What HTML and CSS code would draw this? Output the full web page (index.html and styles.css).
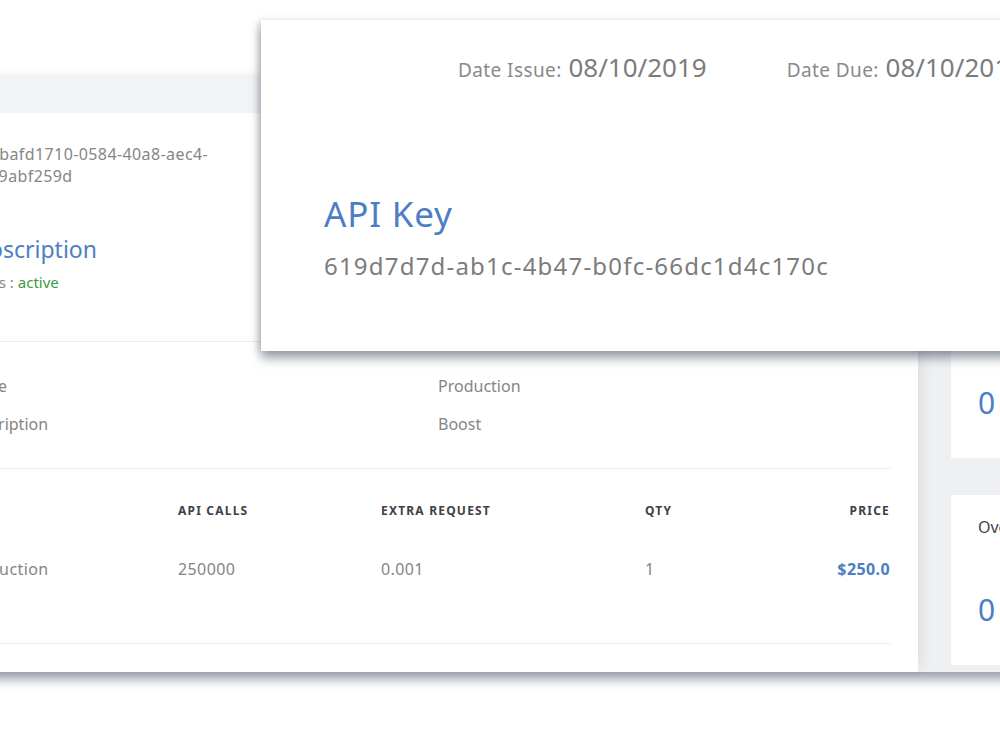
FILE: index.html
```html
<!DOCTYPE html>
<html lang="en">
<head>
    <meta charset="UTF-8">
    <meta name="viewport" content="width=device-width, initial-scale=1.0">
    <title>Subscription Invoice</title>
    <link rel="stylesheet" href="styles.css">
</head>
<body>

<div class="scene">

    <div class="app">
        <div class="app-top"></div>
        <div class="app-body">
            <section class="main">
                <div class="main-band"></div>

                <div class="info">
                    <p class="uid">Key: bafd1710-0584-40a8-aec4-<br>e7c19abf259d</p>
                    <h2 class="sub-title">Subscription</h2>
                    <p class="status">Status : <span class="active">active</span></p>
                </div>

                <div class="details">
                    <div class="detail-row"><span>Name</span><span>Production</span></div>
                    <div class="detail-row"><span>Description</span><span>Boost</span></div>
                </div>

                <div class="plans">
                    <div class="plan-head">
                        <span>PLAN</span>
                        <span>API CALLS</span>
                        <span>EXTRA REQUEST</span>
                        <span>QTY</span>
                        <span class="right">PRICE</span>
                    </div>
                    <div class="plan-row">
                        <span>Production</span>
                        <span>250000</span>
                        <span>0.001</span>
                        <span>1</span>
                        <span class="right price">$250.0</span>
                    </div>
                </div>
            </section>

            <aside class="side">
                <div class="stat-card">
                    <p class="stat-label">Requests</p>
                    <p class="stat-value">0</p>
                </div>
                <div class="stat-card">
                    <p class="stat-label">Overage</p>
                    <p class="stat-value">0</p>
                </div>
            </aside>
        </div>
    </div>

    <div class="invoice-card">
        <div class="dates">
            <p class="date"><span class="date-label">Date Issue:</span> 08/10/2019</p>
            <p class="date"><span class="date-label">Date Due:</span> 08/10/2019</p>
        </div>
        <h1 class="key-title">API Key</h1>
        <p class="key-value">619d7d7d-ab1c-4b47-b0fc-66dc1d4c170c</p>
    </div>

</div>

</body>
</html>
```

FILE: styles.css
```css
body {
    margin: 0;
    background-color: #fff;
    font-family: "Noto Sans", "Open Sans", sans-serif;
    color: #858585;
}

p, h1, h2 {
    margin: 0;
    font-weight: normal;
}

.scene {
    position: relative;
    width: 1000px;
    height: 750px;
    overflow: hidden;
}

/* the app behind */

.app {
    display: flex;
    flex-direction: column;
    width: 1240px;
    height: 672px;
    margin-left: -62px;
    background-color: #fff;
    box-shadow: 0 7px 11px rgba(70, 78, 98, 0.55);
}

.app-top {
    flex-shrink: 0;
    height: 75px;
}

.app-body {
    display: flex;
    flex: 1;
    min-height: 0;
}

.main {
    position: relative;
    z-index: 1;
    width: 928px;
    padding: 0 28px 0 24px;
    background-color: #fff;
    box-shadow: 6px 0 14px -4px rgba(0, 0, 0, 0.09);
}

.main-band {
    height: 38px;
    margin: 0 -28px 0 -24px;
    background-color: #f2f3f4;
}

.info {
    padding: 30px 0 48px;
    border-bottom: 1px solid #ececec;
}

.uid {
    font-size: 16px;
    line-height: 22px;
    letter-spacing: 0.4px;
}

.sub-title {
    margin-top: 46px;
    font-size: 23px;
    line-height: 32px;
    color: #4d7ec4;
}

.status {
    margin-top: 6px;
    font-size: 15px;
    line-height: 22px;
}

.active {
    color: #3c9a3c;
}

.details {
    display: flex;
    flex-direction: column;
    gap: 14px;
    padding: 32px 0;
    border-bottom: 1px solid #ececec;
}

.detail-row {
    display: grid;
    grid-template-columns: 476px 1fr;
    font-size: 16px;
    line-height: 24px;
}

.plans {
    padding: 34px 0 62px;
    border-bottom: 1px solid #ececec;
}

.plan-head, .plan-row {
    display: grid;
    grid-template-columns: 216px 203px 264px 1fr auto;
}

.plan-head {
    font-size: 12px;
    line-height: 16px;
    font-weight: bold;
    letter-spacing: 1.2px;
    color: #3e4148;
}

.plan-row {
    margin-top: 38px;
    font-size: 16px;
    line-height: 24px;
    letter-spacing: 0.4px;
}

.right {
    text-align: right;
}

.price {
    font-weight: bold;
    color: #4d7ec4;
}

.side {
    flex: 1;
    padding: 213px 0 0 33px;
    background-color: #eef0f2;
}

.stat-card {
    height: 170px;
    padding: 21px 0 0 27px;
    box-sizing: border-box;
    background-color: #fff;
}

.stat-card + .stat-card {
    margin-top: 37px;
}

.stat-label {
    font-size: 16px;
    line-height: 22px;
    color: #444;
}

.stat-value {
    margin-top: 54px;
    font-size: 30px;
    line-height: 36px;
    color: #4d7ec4;
}

/* invoice card lying on top */

.invoice-card {
    position: absolute;
    z-index: 2;
    left: 261px;
    top: 20px;
    width: 820px;
    height: 331px;
    background-color: #fff;
    box-shadow: -3px 0 6px rgba(0, 0, 0, 0.1), 0 7px 10px rgba(70, 78, 98, 0.55);
}

.dates {
    display: flex;
    gap: 80px;
    padding: 30px 0 0 197px;
}

.date {
    font-size: 26px;
    line-height: 34px;
    color: #7c7c7c;
    white-space: nowrap;
}

.date-label {
    font-size: 19px;
    letter-spacing: 0.4px;
    color: #8a8a8a;
}

.key-title {
    margin: 107px 0 0 63px;
    font-size: 35px;
    line-height: 40px;
    letter-spacing: 0.8px;
    color: #4d7ec4;
}

.key-value {
    margin: 17px 0 0 63px;
    font-size: 24px;
    line-height: 30px;
    letter-spacing: 1.2px;
    color: #7c7c7c;
}
```
